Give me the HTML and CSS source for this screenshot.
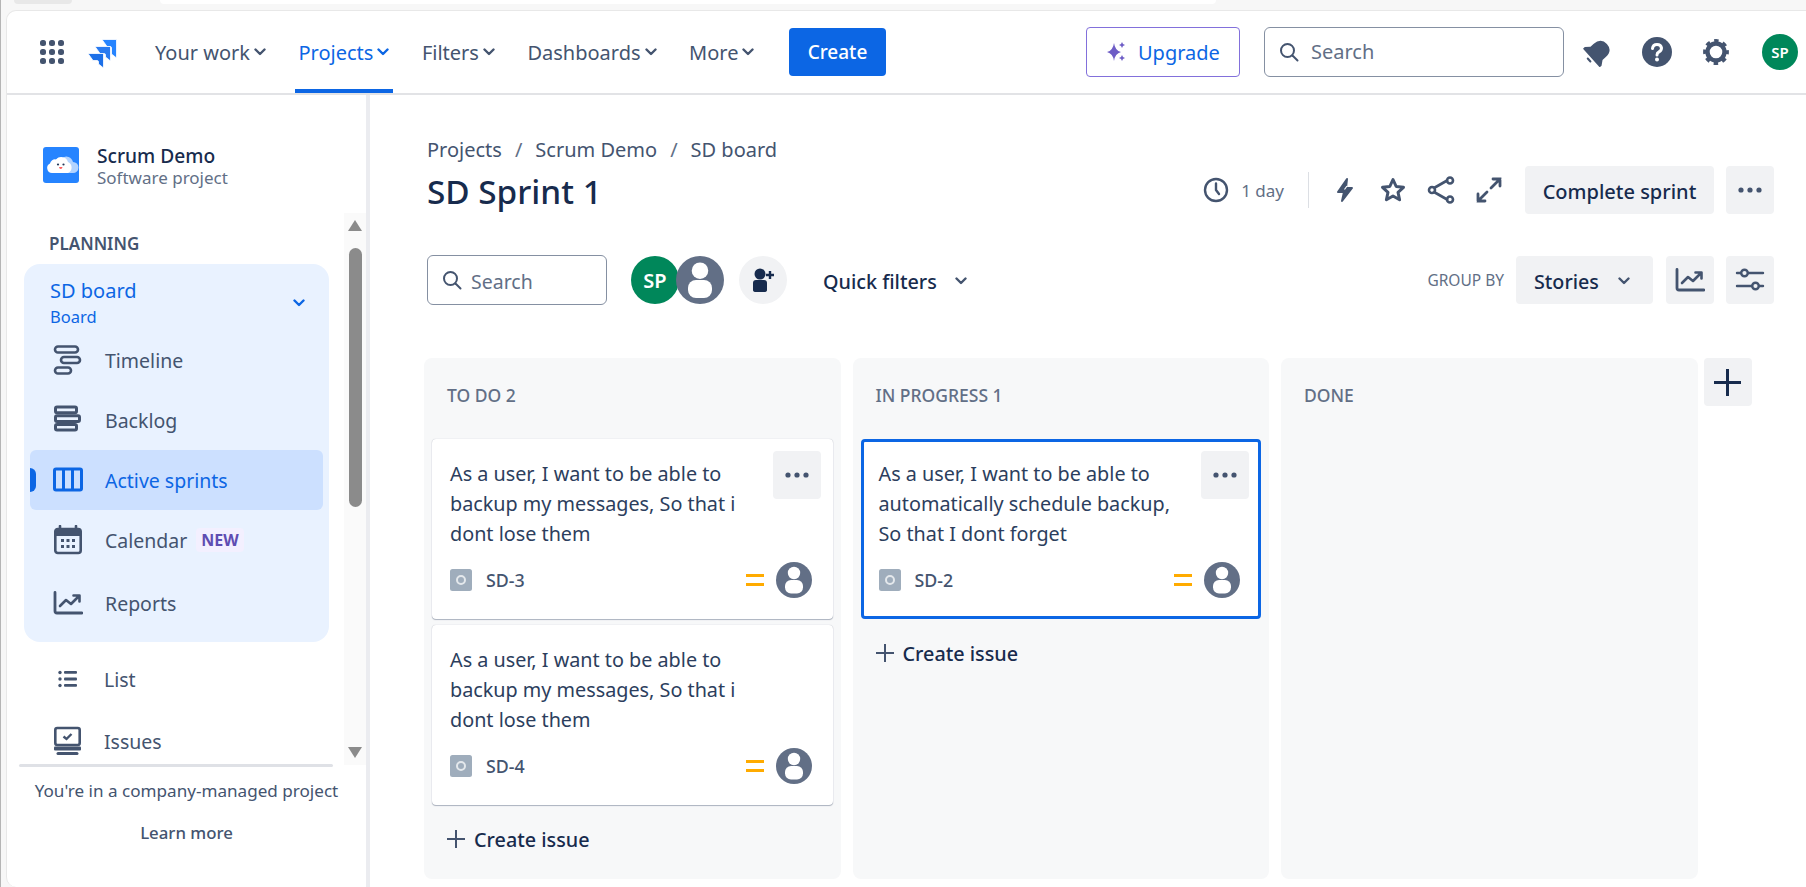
FILE: index.html
```html
<!DOCTYPE html>
<html lang="en">
<head>
  <meta charset="UTF-8" />
  <meta name="viewport" content="width=device-width, initial-scale=1.0" />
  <title>SD Sprint 1</title>
  <link rel="stylesheet" href="styles.css">
</head>

<body>
  <!-- shared icons -->
  <svg class="sprites" width="0" height="0">
    <symbol id="chev" viewBox="0 0 12 8"><path d="M1.500 1.500 6 6l4.500-4.500" fill="none" stroke="currentColor" stroke-width="2.400" stroke-linecap="round" stroke-linejoin="round"/></symbol>
    <symbol id="dots" viewBox="0 0 24 6"><circle cx="3" cy="3" r="2.600" fill="currentColor"/><circle cx="12" cy="3" r="2.600" fill="currentColor"/><circle cx="21" cy="3" r="2.600" fill="currentColor"/></symbol>
    <symbol id="glass" viewBox="0 0 20 20"><circle cx="8.500" cy="8.500" r="6.500" fill="none" stroke="currentColor" stroke-width="2"/><path d="m13.500 13.500 5 5" stroke="currentColor" stroke-width="2" stroke-linecap="round"/></symbol>
    <symbol id="person" viewBox="0 0 36 36"><circle cx="18" cy="18" r="18" fill="#626f86"/><circle cx="18" cy="11" r="6.200" fill="#fff"/><rect x="9" y="18" width="18" height="13.500" rx="6" fill="#fff"/></symbol>
    <symbol id="story" viewBox="0 0 22 22"><rect width="22" height="22" rx="2.500" fill="#9fadbc"/><circle cx="11" cy="11" r="4" fill="none" stroke="#e4e8ec" stroke-width="2"/></symbol>
    <symbol id="medium" viewBox="0 0 18 12"><rect width="18" height="3" fill="#ffab00"/><rect y="9" width="18" height="3" fill="#ffab00"/></symbol>
    <symbol id="plus" viewBox="0 0 18 18"><path d="M9 0v18M0 9h18" stroke="currentColor" stroke-width="2"/></symbol>
    <symbol id="trend" viewBox="0 0 30 24"><path d="M2 1.500V20q0 2 2 2h25" fill="none" stroke="currentColor" stroke-width="2.800" stroke-linecap="round"/><path d="m7 15 6-6 5 4 8-8M20.500 4.500h6v6" fill="none" stroke="currentColor" stroke-width="2.600" stroke-linecap="round" stroke-linejoin="round"/></symbol>
  </svg>

  <div class="chrome">
    <div class="chrome-tab"></div>
    <div class="chrome-url"></div>
  </div>

  <div class="app">
    <header class="topnav">
      <svg class="apps" width="24" height="24" viewBox="0 0 24 24" fill="#44546f">
        <rect width="6" height="6" rx="2.500"/><rect x="9" width="6" height="6" rx="2.500"/><rect x="18" width="6" height="6" rx="2.500"/>
        <rect y="9" width="6" height="6" rx="2.500"/><rect x="9" y="9" width="6" height="6" rx="2.500"/><rect x="18" y="9" width="6" height="6" rx="2.500"/>
        <rect y="18" width="6" height="6" rx="2.500"/><rect x="9" y="18" width="6" height="6" rx="2.500"/><rect x="18" y="18" width="6" height="6" rx="2.500"/>
      </svg>
      <svg class="logo" width="29" height="29" viewBox="0 0 29 29" stroke="#fff" stroke-width=".8">
        <path d="M14 .5h14.500V19l-5-4V9q0-1.500-1.500-1.500h-3z" fill="#2684ff"/>
        <path d="M7 7.500h15.500V22l-5-4v-2q0-1.500-1.500-1.500h-4z" fill="#2a7bf0"/>
        <path d="M0 14.500h15.500V29l-5-4v-2q0-1.500-1.500-1.500H5z" fill="#1d70e8"/>
      </svg>

      <nav class="mainmenu">
        <a class="menu-item">Your work<svg class="chev"><use href="#chev"/></svg></a>
        <a class="menu-item active">Projects<svg class="chev"><use href="#chev"/></svg></a>
        <a class="menu-item">Filters<svg class="chev"><use href="#chev"/></svg></a>
        <a class="menu-item">Dashboards<svg class="chev"><use href="#chev"/></svg></a>
        <a class="menu-item">More<svg class="chev"><use href="#chev"/></svg></a>
      </nav>
      <button class="create-btn">Create</button>

      <button class="upgrade-btn">
        <svg width="22" height="22" viewBox="0 0 22 22" fill="#6e5dc6">
          <path d="M9 2q1 7.500 7 9-6 1.500-7 9-1-7.500-7-9 6-1.500 7-9z"/>
          <path d="M17 1q.5 2.500 3 3-2.500.5-3 3-.5-2.500-3-3 2.500-.5 3-3zM17 14q.5 2.500 3 3-2.500.5-3 3-.5-2.500-3-3 2.500-.5 3-3z"/>
        </svg>
        Upgrade
      </button>
      <div class="top-search">
        <svg class="glass"><use href="#glass"/></svg>
        <span>Search</span>
      </div>

      <div class="top-icons">
        <svg width="30" height="30" viewBox="0 0 30 30" fill="#44546f">
          <g transform="rotate(48 15 15)">
            <path d="M15 3q9 0 9 10v4l3.500 4.500V24h-25v-2.500L6 17v-4q0-10 9-10z"/>
            <rect x="12" y="26" width="6" height="2" rx="1"/>
          </g>
        </svg>
        <svg width="30" height="30" viewBox="0 0 30 30">
          <circle cx="15" cy="15" r="15" fill="#44546f"/>
          <path d="M10.500 11.500q.5-4 4.500-4t4.500 3.500q0 2.500-2.500 3.800-2 1-2 3.200" fill="none" stroke="#fff" stroke-width="3" stroke-linecap="round"/>
          <circle cx="15" cy="22.500" r="2" fill="#fff"/>
        </svg>
        <svg class="gear" width="26" height="26" viewBox="0 0 26 26" fill="none" stroke="#44546f">
          <circle cx="13" cy="13" r="8.500" stroke-width="4.400"/>
          <circle cx="13" cy="13" r="11.200" stroke-width="3.400" stroke-dasharray="4.400 4.400" stroke-dashoffset="2.200"/>
        </svg>
        <span class="avatar-sp small">SP</span>
      </div>
    </header>

    <div class="workspace">
      <aside class="sidebar">
        <div class="project">
          <svg class="project-icon" width="36" height="36" viewBox="0 0 36 36">
            <rect width="36" height="36" rx="3" fill="#2684ff"/>
            <path d="M16 26a6 6 0 0 1 3-15 7 7 0 0 1 11 4 5.500 5.500 0 0 1 0 11z" fill="#b3d4ff"/>
            <path d="M9 26a5 5 0 0 1-2-9.500 5 5 0 0 1 6-4 7 7 0 0 1 12 2.500 6 6 0 0 1 0 11z" fill="#fff"/>
            <circle cx="15" cy="17.500" r="1.100" fill="#253858"/><circle cx="20.500" cy="17.500" r="1.100" fill="#253858"/>
            <path d="M16 20h3.500q-.3 2-1.750 2T16 20z" fill="#ff5c5c"/>
          </svg>
          <div class="project-text">
            <div class="project-name">Scrum Demo</div>
            <div class="project-type">Software project</div>
          </div>
        </div>

        <div class="side-scroll">
          <div class="side-list">
            <div class="side-title">PLANNING</div>
            <div class="board-group">
              <div class="board-head">
                <div>
                  <div class="board-name">SD board</div>
                  <div class="board-sub">Board</div>
                </div>
                <svg class="chev blue"><use href="#chev"/></svg>
              </div>

              <a class="side-item">
                <svg class="side-icon" viewBox="0 0 30 30" fill="none" stroke="#44546f" stroke-width="2.600">
                  <rect x="2" y="1.500" width="23" height="6" rx="3"/><rect x="8" y="12" width="19" height="6" rx="3"/><rect x="2" y="22.500" width="16" height="6" rx="3"/>
                </svg>
                Timeline
              </a>
              <a class="side-item">
                <svg class="side-icon" viewBox="0 0 30 30" fill="none" stroke="#44546f" stroke-width="3" stroke-linejoin="round">
                  <rect x="2.500" y="2" width="21" height="5.700" rx="1.500"/><rect x="2.500" y="10.700" width="24" height="5.700" rx="1.500"/><rect x="2.500" y="19.400" width="21" height="5.700" rx="1.500"/>
                </svg>
                Backlog
              </a>
              <a class="side-item current">
                <svg class="side-icon" viewBox="0 0 30 30" fill="none" stroke="#0c66e4" stroke-width="3">
                  <rect x="1.500" y="4" width="27" height="21" rx="1.500"/><path d="M10.500 4v21M19.500 4v21"/>
                </svg>
                Active sprints
              </a>
              <a class="side-item">
                <svg class="side-icon" viewBox="0 0 30 30">
                  <path d="M7 1v3M23 1v3" stroke="#44546f" stroke-width="2.600" stroke-linecap="round"/>
                  <rect x="2.300" y="4" width="25.400" height="24" rx="2.500" fill="none" stroke="#44546f" stroke-width="2.600"/>
                  <rect x="2.300" y="4" width="25.400" height="7" fill="#44546f"/>
                  <g fill="#44546f"><rect x="8" y="14" width="3" height="3"/><rect x="13.500" y="14" width="3" height="3"/><rect x="19" y="14" width="3" height="3"/><rect x="8" y="20" width="3" height="3"/><rect x="13.500" y="20" width="3" height="3"/><rect x="19" y="20" width="3" height="3"/></g>
                </svg>
                Calendar<span class="new-tag">NEW</span>
              </a>
              <a class="side-item reports">
                <svg class="side-icon"><use href="#trend"/></svg>
                Reports
              </a>
            </div>

            <a class="side-item plain list">
              <svg class="side-icon" viewBox="0 0 30 30" fill="#44546f">
                <circle cx="7" cy="8.500" r="1.700"/><circle cx="7" cy="15" r="1.700"/><circle cx="7" cy="21.500" r="1.700"/>
                <rect x="11" y="7" width="13" height="2.800" rx="1"/><rect x="11" y="13.600" width="13" height="2.800" rx="1"/><rect x="11" y="20" width="13" height="2.800" rx="1"/>
              </svg>
              List
            </a>
            <a class="side-item plain">
              <svg class="side-icon" viewBox="0 0 30 30">
                <rect x="2.300" y="2" width="24.400" height="17" rx="2" fill="none" stroke="#44546f" stroke-width="2.600"/>
                <path d="m10.500 10.500 3 2.500 5-5" fill="none" stroke="#44546f" stroke-width="2.400"/>
                <rect x="1" y="20.500" width="27" height="4" rx="1" fill="#44546f"/><rect x="3.500" y="26" width="22" height="3" rx="1.500" fill="#44546f"/>
              </svg>
              Issues
            </a>
          </div>

          <div class="side-scrollbar">
            <span class="arrow-up"></span>
            <span class="thumb"></span>
            <span class="arrow-down"></span>
          </div>
        </div>

        <div class="side-foot">
          <div class="foot-line"></div>
          <p class="foot-text">You're in a company-managed project</p>
          <a class="foot-link">Learn more</a>
        </div>
      </aside>

      <main class="content">
        <div class="crumbs">
          <span>Projects</span><span class="slash">/</span><span>Scrum Demo</span><span class="slash">/</span><span>SD board</span>
        </div>

        <div class="title-row">
          <h1>SD Sprint 1</h1>
          <div class="sprint-tools">
            <svg class="clock" width="26" height="26" viewBox="0 0 26 26" fill="none" stroke="#44546f" stroke-width="2.400">
              <circle cx="13" cy="13" r="11"/><path d="M13 6.500V13l3 4" stroke-linecap="round" stroke-linejoin="round"/>
            </svg>
            <span class="days">1 day</span>
            <span class="tool-sep"></span>
            <span class="tool">
              <svg width="20" height="26" viewBox="0 0 20 26"><path d="M12 2 3 15h6l-2 9 10-13h-6z" fill="#44546f" stroke="#44546f" stroke-width="2" stroke-linejoin="round"/><path d="M9.500 12.500 12 9" stroke="#fff" stroke-width="1.200"/></svg>
            </span>
            <span class="tool">
              <svg width="26" height="26" viewBox="0 0 26 26"><path d="m13 2.500 3.200 7 7.300.8-5.500 5 1.600 7.500-6.600-3.800-6.600 3.800L8 15.300l-5.500-5 7.300-.8z" fill="none" stroke="#44546f" stroke-width="3" stroke-linejoin="round"/></svg>
            </span>
            <span class="tool">
              <svg width="28" height="28" viewBox="0 0 28 28" fill="none" stroke="#44546f" stroke-width="2.600"><path d="m7 12 14-8M7 16l14 8" /><circle cx="5" cy="14" r="3"/><circle cx="23" cy="4.500" r="3"/><circle cx="23" cy="23.500" r="3"/></svg>
            </span>
            <span class="tool">
              <svg width="26" height="26" viewBox="0 0 26 26" fill="none" stroke="#44546f" stroke-width="2.800" stroke-linecap="round"><path d="m15 11 9-9M17 2h7v7M11 15l-9 9M2 17v7h7"/></svg>
            </span>
            <button class="gray-btn complete">Complete sprint</button>
            <button class="gray-btn square"><svg class="dots"><use href="#dots"/></svg></button>
          </div>
        </div>

        <div class="filter-row">
          <div class="board-search">
            <svg class="glass"><use href="#glass"/></svg>
            <span>Search</span>
          </div>
          <div class="people">
            <span class="avatar-sp">SP</span>
            <svg class="person-big"><use href="#person"/></svg>
            <span class="add-person">
              <svg width="26" height="26" viewBox="0 0 26 26" fill="#172b4d"><circle cx="10" cy="7" r="5.500"/><path d="M3 16q0-3 3-3h8q3 0 3 3v7q0 2-3 2H6q-3 0-3-2z"/><path d="M20 4v8M16 8h8" stroke="#172b4d" stroke-width="2.400"/></svg>
            </span>
          </div>
          <button class="quick">Quick filters<svg class="chev dark"><use href="#chev"/></svg></button>

          <div class="group-tools">
            <span class="group-label">GROUP BY</span>
            <button class="gray-btn stories">Stories<svg class="chev dark"><use href="#chev"/></svg></button>
            <button class="gray-btn square"><svg class="tool-icon"><use href="#trend"/></svg></button>
            <button class="gray-btn square">
              <svg class="tool-icon" viewBox="0 0 30 24" fill="none" stroke="#44546f" stroke-width="2.400" stroke-linecap="round">
                <path d="M2 5h4M13 5h15M2 18h15M24 18h4"/><circle cx="9.500" cy="5" r="3.300"/><circle cx="20.500" cy="18" r="3.300"/>
              </svg>
            </button>
          </div>
        </div>

        <div class="board">
          <section class="column">
            <h2>TO DO 2</h2>
            <div class="cards">
              <article class="card">
                <button class="gray-btn square card-more"><svg class="dots"><use href="#dots"/></svg></button>
                <p>As a user, I want to be able to backup my messages, So that i dont lose them</p>
                <div class="card-foot">
                  <svg class="story"><use href="#story"/></svg><span class="key">SD-3</span>
                  <svg class="medium"><use href="#medium"/></svg><svg class="person"><use href="#person"/></svg>
                </div>
              </article>
              <article class="card">
                <p>As a user, I want to be able to backup my messages, So that i dont lose them</p>
                <div class="card-foot">
                  <svg class="story"><use href="#story"/></svg><span class="key">SD-4</span>
                  <svg class="medium"><use href="#medium"/></svg><svg class="person"><use href="#person"/></svg>
                </div>
              </article>
            </div>
            <a class="create-issue"><svg class="plus"><use href="#plus"/></svg>Create issue</a>
          </section>

          <section class="column">
            <h2>IN PROGRESS 1</h2>
            <div class="cards">
              <article class="card selected">
                <button class="gray-btn square card-more"><svg class="dots"><use href="#dots"/></svg></button>
                <p>As a user, I want to be able to automatically schedule backup, So that I dont forget</p>
                <div class="card-foot">
                  <svg class="story"><use href="#story"/></svg><span class="key">SD-2</span>
                  <svg class="medium"><use href="#medium"/></svg><svg class="person"><use href="#person"/></svg>
                </div>
              </article>
            </div>
            <a class="create-issue"><svg class="plus"><use href="#plus"/></svg>Create issue</a>
          </section>

          <section class="column">
            <h2>DONE</h2>
          </section>

          <button class="gray-btn square add-col"><svg class="plus big"><use href="#plus"/></svg></button>
        </div>
      </main>
    </div>
  </div>
</body>
</html>
```

FILE: styles.css
```css
* {
  box-sizing: border-box;
}

html, body {
  height: 100%;
}

body {
  margin: 0;
  overflow: hidden;
  background: #f7f7f7;
  border-left: 1px solid #b5b5b5;
  font-family: "Noto Sans", "Open Sans", sans-serif;
  color: #172b4d;
}

button {
  font-family: inherit;
  border: none;
  cursor: pointer;
}

.sprites {
  position: absolute;
}

/* browser strip above the page */
.chrome {
  display: flex;
  height: 10px;
}

.chrome-tab {
  width: 58px;
  height: 4px;
  margin-left: 13px;
  background: #e8e8e8;
  border-radius: 0 0 4px 4px;
}

.chrome-url {
  width: 1056px;
  height: 4px;
  margin-left: 88px;
  background: #fff;
  border-radius: 0 0 12px 12px;
}

.app {
  display: flex;
  flex-direction: column;
  height: calc(100vh - 10px);
  margin-left: 5px;
  background: #fff;
  border-radius: 10px 0 0 10px;
  border-left: 1px solid #e8e8e8;
  border-top: 1px solid #e8e8e8;
}

/* top navigation */
.topnav {
  display: flex;
  align-items: center;
  flex: none;
  height: 84px;
  padding-left: 33px;
  border-bottom: 2px solid #e2e3e6;
}

.apps {
  flex: none;
}

.logo {
  flex: none;
  margin: 3px 0 0 24px;
}

.mainmenu {
  display: flex;
  align-self: stretch;
  margin-left: 34px;
}

.menu-item {
  display: flex;
  align-items: center;
  gap: 4px;
  padding: 0 4px;
  margin-right: 24.500px;
  font-size: 20px;
  color: #44546f;
  border-bottom: 4px solid transparent;
  border-top: 4px solid transparent;
}

.menu-item.active {
  color: #0c66e4;
  border-bottom-color: #0c66e4;
}

.chev {
  width: 12px;
  height: 8px;
  flex: none;
}

.chev.blue {
  color: #0c66e4;
}

.chev.dark {
  color: #44546f;
}

.create-btn {
  width: 97px;
  height: 48px;
  margin-left: 6px;
  background: #0c66e4;
  color: #fff;
  font-size: 19px;
  font-weight: 500;
  border-radius: 4px;
}

.upgrade-btn {
  display: flex;
  align-items: center;
  gap: 11px;
  width: 154px;
  height: 50px;
  margin-left: 200px;
  padding-left: 18px;
  background: #fff;
  border: 1px solid #8270db;
  border-radius: 4px;
  color: #0c66e4;
  font-size: 20px;
}

.top-search {
  display: flex;
  align-items: center;
  gap: 12px;
  width: 300px;
  height: 50px;
  margin-left: 24px;
  padding-left: 14px;
  border: 1px solid #8590a2;
  border-radius: 6px;
  color: #626f86;
  font-size: 20px;
}

.top-search span {
  margin-top: -2px;
}

.glass {
  width: 20px;
  height: 20px;
  color: #44546f;
  flex: none;
}

.top-icons {
  display: flex;
  align-items: center;
  gap: 29px;
  margin-left: 19px;
}

.gear {
  margin-left: 2px;
}

.avatar-sp {
  display: flex;
  align-items: center;
  justify-content: center;
  width: 48px;
  height: 48px;
  border-radius: 50%;
  background: #00875a;
  color: #fff;
  font-size: 20px;
  font-weight: 600;
}

.avatar-sp.small {
  width: 36px;
  height: 36px;
  margin-left: 4px;
  font-size: 15px;
}

/* sidebar + board */
.workspace {
  display: flex;
  flex: 1;
  min-height: 0;
}

.sidebar {
  display: flex;
  flex-direction: column;
  flex: none;
  width: 363px;
  border-right: 4px solid #ebecf0;
}

.project {
  display: flex;
  align-items: center;
  gap: 18px;
  height: 36px;
  margin-top: 52px;
  padding-left: 36px;
  flex: none;
}

.project-icon {
  flex: none;
}

.project-text {
  margin-top: 3px;
}

.project-name {
  font-size: 19.200px;
  font-weight: 500;
  line-height: 22px;
}

.project-type {
  font-size: 17px;
  line-height: 22px;
  color: #626f86;
}

.side-scroll {
  display: flex;
  height: 552px;
  margin-top: 30px;
  overflow: hidden;
  flex: none;
}

.side-list {
  flex: 1;
  min-width: 0;
}

.side-title {
  margin: 21px 0 10px 42px;
  font-size: 17px;
  line-height: 20px;
  font-weight: 600;
  color: #44546f;
}

.board-group {
  width: 305px;
  height: 378px;
  margin-left: 17px;
  padding-top: 11px;
  background: #e9f2ff;
  border-radius: 16px;
}

.board-head {
  display: flex;
  align-items: center;
  justify-content: space-between;
  height: 55px;
  padding: 0 24px 0 26px;
  color: #0c66e4;
}

.board-name {
  font-size: 20px;
  line-height: 27px;
}

.board-sub {
  font-size: 16.500px;
  line-height: 25px;
}

.side-item {
  display: flex;
  align-items: center;
  gap: 22px;
  width: 293px;
  height: 60px;
  margin-left: 6px;
  padding: 0 0 0 23px;
  font-size: 19.500px;
  color: #44546f;
  border-radius: 6px;
  position: relative;
}

.side-item.current {
  color: #0c66e4;
  background: #cce0ff;
}

.side-item.current::before {
  content: "";
  position: absolute;
  left: 0;
  top: 18px;
  width: 6px;
  height: 24px;
  background: #0c66e4;
  border-radius: 0 6px 6px 0;
}

.side-item.reports {
  margin-top: 3px;
}

.side-item.plain {
  margin-left: 23px;
  height: 62px;
  gap: 21px;
}

.side-item.list {
  margin-top: 6px;
}

.side-icon {
  width: 30px;
  height: 30px;
  flex: none;
  color: #44546f;
}

.new-tag {
  margin-left: -13px;
  padding: 0 5px;
  background: #f3f0ff;
  color: #5e4db2;
  font-size: 16px;
  line-height: 24px;
  font-weight: 700;
  border-radius: 4px;
}

.side-scrollbar {
  display: flex;
  flex-direction: column;
  align-items: center;
  flex: none;
  width: 22px;
  padding: 7px 0;
  background: #fafafa;
}

.arrow-up {
  border: 7px solid transparent;
  border-top: none;
  border-bottom: 11px solid #8b8b8b;
}

.arrow-down {
  margin-top: auto;
  border: 7px solid transparent;
  border-bottom: none;
  border-top: 11px solid #8b8b8b;
}

.thumb {
  width: 13px;
  height: 259px;
  margin-top: 17px;
  background: #8b8b8b;
  border-radius: 7px;
}

.side-foot {
  text-align: center;
  flex: none;
}

.foot-line {
  width: 314px;
  height: 3px;
  margin: -1px 0 0 12px;
  background: #dfe1e6;
  border-radius: 2px;
}

.foot-text {
  margin: 12px 0 18px;
  font-size: 17.100px;
  line-height: 24px;
  color: #44546f;
}

.foot-link {
  display: block;
  font-size: 16.800px;
  line-height: 24px;
  font-weight: 500;
  color: #44546f;
}

/* main content */
.content {
  flex: 1;
  min-width: 0;
  padding: 42px 32px 0 57px;
  display: flex;
  flex-direction: column;
}

.crumbs {
  display: flex;
  gap: 13px;
  height: 26px;
  margin-bottom: 3px;
  font-size: 20px;
  line-height: 26px;
  color: #44546f;
}

.slash {
  color: #626f86;
}

.title-row {
  display: flex;
  align-items: center;
  justify-content: space-between;
  height: 48px;
}

h1 {
  margin: 0;
  padding-top: 2px;
  font-size: 33.300px;
  font-weight: 500;
  color: #172b4d;
}

.sprint-tools {
  display: flex;
  align-items: center;
}

.days {
  margin-left: 12px;
  font-size: 17px;
  color: #626f86;
}

.tool-sep {
  width: 1px;
  height: 36px;
  margin: 0 12px 0 24px;
  background: #dcdfe4;
}

.tool {
  display: flex;
  align-items: center;
  justify-content: center;
  width: 48px;
}

.gray-btn {
  background: #f1f2f4;
  color: #172b4d;
  border-radius: 4px;
  height: 48px;
}

.gray-btn.square {
  display: flex;
  align-items: center;
  justify-content: center;
  width: 48px;
  padding: 0;
}

.complete {
  width: 189px;
  margin: 0 12px 0 12px;
  padding: 2px 0 0;
  font-size: 20px;
  font-weight: 500;
}

.dots {
  width: 24px;
  height: 6px;
  color: #44546f;
}

.filter-row {
  display: flex;
  align-items: center;
  height: 50px;
  margin-top: 41px;
}

.board-search {
  display: flex;
  align-items: center;
  gap: 9px;
  width: 180px;
  height: 50px;
  padding-left: 14px;
  border: 1px solid #8590a2;
  border-radius: 6px;
  color: #626f86;
  font-size: 19.500px;
}

.board-search span {
  margin-top: 2px;
}

.people {
  display: flex;
  align-items: center;
  margin-left: 24px;
}

.person-big {
  width: 48px;
  height: 48px;
  margin-left: -3px;
}

.add-person {
  display: flex;
  align-items: center;
  justify-content: center;
  width: 48px;
  height: 48px;
  margin-left: 15px;
  border-radius: 50%;
  background: #f1f2f4;
}

.quick {
  display: flex;
  align-items: center;
  gap: 18px;
  margin-left: 36px;
  padding: 2px 0 0;
  background: none;
  color: #172b4d;
  font-size: 19.800px;
  font-weight: 500;
}

.group-tools {
  display: flex;
  align-items: center;
  margin-left: auto;
}

.group-label {
  font-size: 15.500px;
  color: #626f86;
  margin-right: 12px;
}

.stories {
  display: flex;
  align-items: center;
  justify-content: space-between;
  width: 137px;
  padding: 2px 23px 0 18px;
  margin-right: 13px;
  font-size: 19.700px;
  font-weight: 500;
}

.group-tools .square + .square {
  margin-left: 12px;
}

.tool-icon {
  width: 30px;
  height: 24px;
  color: #44546f;
}

/* board columns */
.board {
  display: flex;
  align-items: stretch;
  flex: 1;
  min-height: 0;
  gap: 12px;
  margin: 53px 0 8px -3px;
}

.column {
  width: 416.500px;
  padding: 0 8px;
  background: #f7f8f9;
  border-radius: 8px;
}

.column h2 {
  height: 81px;
  margin: 0;
  padding: 0 0 0 15px;
  font-size: 17.500px;
  line-height: 74px;
  font-weight: 500;
  color: #626f86;
}

.cards {
  display: flex;
  flex-direction: column;
  gap: 6px;
}

.card {
  position: relative;
  height: 180px;
  padding: 20px 18px 0;
  background: #fff;
  border-radius: 4px;
  box-shadow: 0 1px 1px rgba(9, 30, 66, 0.3), 0 0 1px rgba(9, 30, 66, 0.3);
}

.card.selected {
  box-shadow: none;
  border: 3px solid #0c66e4;
  padding: 17px 15px 0;
}

.card p {
  height: 90px;
  margin: 0;
  width: 310px;
  font-size: 19.800px;
  line-height: 30px;
  color: #2c3e5d;
}

.card-more {
  position: absolute;
  top: 12px;
  right: 12px;
}

.selected .card-more {
  top: 9px;
  right: 9px;
}

.card-foot {
  display: flex;
  align-items: center;
  height: 36px;
  margin-top: 13px;
  padding-right: 3px;
}

.story {
  width: 22px;
  height: 22px;
  flex: none;
}

.key {
  margin-left: 14px;
  margin-bottom: 1px;
  font-size: 17.800px;
  font-weight: 500;
  color: #44546f;
}

.medium {
  width: 18px;
  height: 12px;
  margin-left: auto;
  flex: none;
}

.person {
  width: 36px;
  height: 36px;
  margin-left: 12px;
  flex: none;
}

.create-issue {
  display: flex;
  align-items: center;
  gap: 9px;
  height: 48px;
  margin-top: 10px;
  padding-left: 15px;
  font-size: 19.800px;
  font-weight: 500;
  color: #172b4d;
}

.plus {
  width: 18px;
  height: 18px;
  color: #44546f;
}

.plus.big {
  width: 27px;
  height: 27px;
  color: #172b4d;
}

.add-col {
  margin-left: -6px;
}
```
